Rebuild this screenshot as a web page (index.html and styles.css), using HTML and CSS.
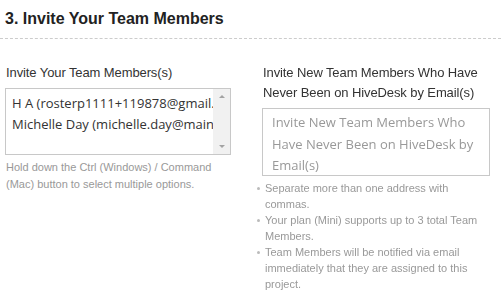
FILE: index.html
```html
<!DOCTYPE html>
<html lang="en">
<head>
    <meta charset="UTF-8">
    <meta name="viewport" content="width=device-width, initial-scale=1.0">
    <title>Invite Your Team Members</title>
    <link rel="stylesheet" href="styles.css">
</head>
<body>
    <div class="step">
        <div class="step-header">
            <h2>3. Invite Your Team Members</h2>
        </div>

        <div class="fields">
            <div class="field">
                <label class="field-label">Invite Your Team Members(s)</label>
                <div class="multi-select">
                    <div class="options">
                        <div class="option">H A (rosterp1111+119878@gmail.com)</div>
                        <div class="option">Michelle Day (michelle.day@maintenance.com)</div>
                    </div>
                    <div class="scrollbar">
                        <span class="arrow arrow-up"></span>
                        <span class="arrow arrow-down"></span>
                    </div>
                </div>
                <p class="help">Hold down the Ctrl (Windows) / Command (Mac) button to select multiple options.</p>
            </div>

            <div class="field">
                <label class="field-label">Invite New Team Members Who Have Never Been on HiveDesk by Email(s)</label>
                <textarea class="emails" placeholder="Invite New Team Members Who Have Never Been on HiveDesk by Email(s)"></textarea>
                <ul class="notes">
                    <li>Separate more than one address with commas.</li>
                    <li>Your plan (Mini) supports up to 3 total Team Members.</li>
                    <li>Team Members will be notified via email immediately that they are assigned to this project.</li>
                </ul>
            </div>
        </div>
    </div>
</body>
</html>
```

FILE: styles.css
```css
* {
    margin: 0;
    padding: 0;
    box-sizing: border-box;
}

body {
    background: #fff;
    font-family: "Liberation Sans", Arial, sans-serif;
    color: #333;
}

.step-header {
    border-bottom: 1px dashed #ccc;
    padding: 8px 5px 0;
    height: 39px;
}

.step-header h2 {
    font-size: 16px;
    line-height: 22px;
    font-weight: bold;
    color: #222;
}

.fields {
    display: grid;
    grid-template-columns: 226px 228px;
    column-gap: 31px;
    padding: 24px 5px 0;
}

.field-label {
    display: block;
    font-size: 13px;
    letter-spacing: -0.1px;
    line-height: 20px;
    margin-bottom: 5px;
    padding-left: 1px;
}

.multi-select {
    display: flex;
    height: 67px;
    border: 1px solid #c8c8c8;
}

.options {
    flex: 1;
    overflow: hidden;
    padding: 4px 0 0 6px;
    font-family: "Open Sans", sans-serif;
    font-size: 13px;
    color: #333;
}

.option {
    line-height: 21px;
    white-space: nowrap;
}

.scrollbar {
    width: 17px;
    background: #f1f1f1;
    display: flex;
    flex-direction: column;
    justify-content: space-between;
    align-items: center;
    padding: 6px 0;
}

.arrow {
    width: 0;
    height: 0;
    border-left: 3px solid transparent;
    border-right: 3px solid transparent;
}

.arrow-up {
    border-bottom: 3px solid #a3a3a3;
}

.arrow-down {
    border-top: 3px solid #a3a3a3;
}

.help {
    margin-top: 4px;
    font-size: 11px;
    line-height: 17px;
    color: #999;
    padding-left: 1px;
}

.emails {
    display: block;
    width: 228px;
    height: 68px;
    border: 1px solid #c8c8c8;
    padding: 3px 9px;
    font-family: "Open Sans", sans-serif;
    font-size: 13px;
    line-height: 21.5px;
    resize: none;
    outline: none;
}

.emails::placeholder {
    color: #999;
}

.notes {
    list-style: none;
    margin-top: 4px;
    font-size: 11px;
    line-height: 16px;
    color: #999;
}

.notes li {
    display: flex;
}

.notes li::before {
    content: "";
    flex-shrink: 0;
    width: 3px;
    height: 3px;
    border-radius: 50%;
    background: #bbb;
    margin: 7px 5px 0 -5px;
}
```
